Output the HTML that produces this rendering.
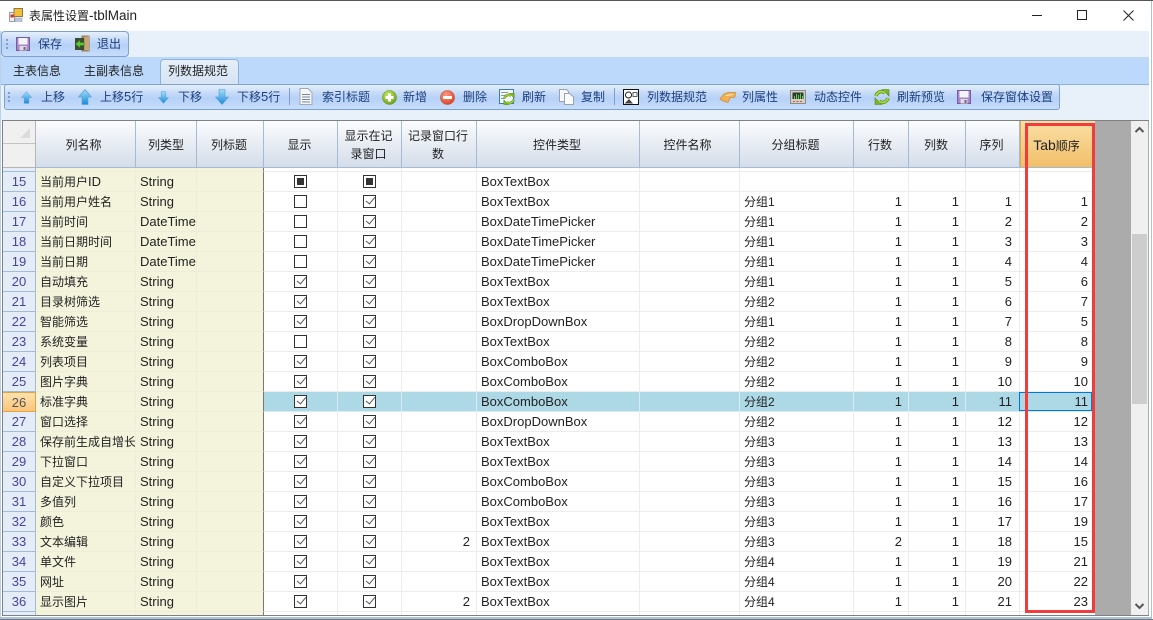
<!DOCTYPE html>
<html><head><meta charset="utf-8"><title>表属性设置-tblMain</title>
<style>
html,body{margin:0;padding:0;background:#fff}
body{width:1153px;height:620px;position:relative;overflow:hidden;font:12px "Liberation Sans","Noto Sans CJK SC",sans-serif;color:#222}
.a{position:absolute}
.t{position:absolute;white-space:nowrap;line-height:16px;color:#1d3f7e}
.i{position:absolute}
table{position:absolute;left:0;top:0;border-collapse:separate;border-spacing:0;table-layout:fixed;width:1092px}
td,th{box-sizing:border-box;padding:0;border-right:1px solid #ececec;border-bottom:1px solid #ececec;height:20px;white-space:nowrap;overflow:hidden;font-weight:normal}
th{height:47px;background:linear-gradient(#fbfcfe,#d4dde9);border-right:1px solid #a3bcd6;border-bottom:1px solid #a3bcd6;line-height:18px;color:#222;font-size:12px;padding:2px 2px 0 0}
th.w{padding-right:4px}
th.z{padding-right:0}
th.s{background:linear-gradient(#fadfa6,#f2bf68);border-left:1px solid #e5a850;border-right:0;padding-right:3px}
th.k{background:#f0f0f0;border-right:1px solid #b5b5b5;border-bottom:1px solid #b5b5b5;padding:0}
td:nth-child(1){background:#e4ecf8;border-right:1px solid #a3bcd6;border-bottom:1px solid #a3bcd6;text-align:center;color:#45459a;font-size:13px}
td:nth-child(2){background:#f4f4dc;border-color:#ededd8;padding-left:4px}
td:nth-child(3){background:#f4f4dc;border-color:#ededd8;padding-left:4px;font-size:13px}
td:nth-child(4){background:#f4f4dc;border-color:#ededd8;border-right:1px solid #777}
td:nth-child(5),td:nth-child(6){text-align:center;background:#fff}
td:nth-child(7),td:nth-child(11),td:nth-child(12),td:nth-child(13){text-align:right;padding-right:6px;font-size:13px;background:#fff}
td:nth-child(8){padding-left:4px;font-size:13px;background:#fff}
td:nth-child(9){background:#fff}
td:nth-child(10){padding-left:4px;background:#fff}
td:nth-child(14){text-align:right;padding-right:7px;font-size:13px;background:#fff;border-right:0}
td:nth-child(13){padding-right:7px}
tr.sel td{background:#add8e6;border-color:#d6ecf2}
tr.sel td:nth-child(1){background:linear-gradient(#fde2ae,#fac57a);border:1px solid #e8a040;border-left:0;color:#555}
tr.sel td:nth-child(2),tr.sel td:nth-child(3),tr.sel td:nth-child(4){background:#f4f4dc;border-color:#ededd8}
tr.sel td:nth-child(4){border-right:1px solid #777}
tr.p td{height:4px;font-size:0;line-height:0}
tr.q td{height:4px;font-size:0;line-height:0;border-bottom:0}
b{font-weight:normal;display:inline-block;width:13px;height:13px;box-sizing:border-box;border:1px solid #333;background:#fff;position:relative;vertical-align:middle;top:-1px}
b.c::after{content:"";position:absolute;left:1.5px;top:1.5px;width:8px;height:4px;border-left:1.4px solid #555;border-bottom:1.4px solid #555;transform:rotate(-50deg)}
b.m::after{content:"";position:absolute;left:2px;top:2px;width:7px;height:7px;background:#333}
.tb{background:linear-gradient(#e6effb 0,#c9ddf8 30%,#b6d1f8 55%,#c7dcfa 100%);border:1px solid #7da2ce;border-radius:3px;box-sizing:border-box}
.grip{position:absolute;width:2px;height:2px;background:#7f9fc6}
</style></head>
<body>
<svg width="0" height="0" style="position:absolute">
<defs>
<linearGradient id="bl" x1="0" y1="0" x2="0" y2="1"><stop offset="0" stop-color="#a4dcf8"/><stop offset="1" stop-color="#1a8ad8"/></linearGradient>
<radialGradient id="gr" cx=".4" cy=".3" r=".8"><stop offset="0" stop-color="#c8e860"/><stop offset="1" stop-color="#5c9a18"/></radialGradient>
<radialGradient id="rd" cx=".4" cy=".3" r=".8"><stop offset="0" stop-color="#fb9a80"/><stop offset="1" stop-color="#d83a20"/></radialGradient>
<symbol id="fl" viewBox="0 0 14 14"><path d="M.5.5h13v13H.5z" fill="#a888c8" stroke="#7a5aa0"/><path d="M2.500 1h9v6.500h-9z" fill="#f4f4f8"/><path d="M3.500 9h7v4.500h-7z" fill="#ddd"/><path d="M7.500 10h2v3h-2z" fill="#77608f"/></symbol>
<symbol id="up" viewBox="0 0 14 16"><path d="M7 .5 13.500 8H10V15.500H4V8H.5z" fill="url(#bl)" stroke="#4aa0d8" stroke-width=".6"/></symbol>
<symbol id="dn" viewBox="0 0 14 16"><path d="M7 15.500 13.500 8H10V.5H4V8H.5z" fill="url(#bl)" stroke="#4aa0d8" stroke-width=".6"/></symbol>
<symbol id="rc" viewBox="0 0 16 16">
<path d="M2 7C3 3 8 1 11 4" fill="none" stroke="#4f8a10" stroke-width="3.400"/><path d="M8.500.5H15V7z" fill="#7cb428" stroke="#4f8a10" stroke-width=".6"/><path d="M2 7C3 3 8 1 11 4" fill="none" stroke="#a6d63c" stroke-width="2"/>
<path d="M14 9C13 13 8 15 5 12" fill="none" stroke="#4f8a10" stroke-width="3.400"/><path d="M7.500 15.500H1V9z" fill="#7cb428" stroke="#4f8a10" stroke-width=".6"/><path d="M14 9C13 13 8 15 5 12" fill="none" stroke="#a6d63c" stroke-width="2"/>
</symbol>
</defs>
</svg>

<!-- title bar -->
<div class="a" style="left:0;top:0;width:1153px;height:1px;background:#555"></div>
<svg class="i" style="left:9px;top:8px" width="14" height="14" viewBox="0 0 14 14"><path d="M.5 4.500h5v9h-5z" fill="#eee" stroke="#999"/><path d="M1.500 6.500h3v3h-3z" fill="#d83020"/><path d="M5 .5h8.500v8H5z" fill="#f4c038" stroke="#8a7a50"/><path d="M6 10h7v3.500H6z" fill="#bcc8dc" stroke="#8a98b0" stroke-width=".6"/></svg>
<div class="t" style="left:29px;top:8px;color:#222;font-size:12px">表属性设置<span style="font-size:13.5px">-tblMain</span></div>
<div class="a" style="left:1032px;top:15px;width:10px;height:1px;background:#222"></div>
<div class="a" style="left:1077px;top:10px;width:10px;height:10px;box-sizing:border-box;border:1px solid #222"></div>
<svg class="i" style="left:1123px;top:10px" width="11" height="11" viewBox="0 0 11 11"><path d="M.5.500 10.500 10.500M10.500.500.5 10.500" stroke="#222" stroke-width="1" fill="none"/></svg>

<!-- toolbar band -->
<div class="a" style="left:0;top:31px;width:1151px;height:26px;background:#e8f0fa"></div>
<div class="a tb" style="left:1px;top:31px;width:128px;height:26px;border-radius:4px"></div>
<div class="grip" style="left:6px;top:39px"></div><div class="grip" style="left:6px;top:43px"></div><div class="grip" style="left:6px;top:47px"></div>
<svg class="i" style="left:16px;top:37px" width="14" height="14"><use href="#fl"/></svg>
<div class="t" style="left:38px;top:36px">保存</div>
<svg class="i" style="left:74px;top:35px" width="16" height="17" viewBox="0 0 16 17"><path d="M8 1h7v15H8z" fill="#b89868" stroke="#7a6038" stroke-width=".8"/><path d="M11 2 15 1v15l-4-1z" fill="#c8a878"/><path d="M1 3h9v12H1z" fill="#3c4c30"/><path d="M1.500 9 6 5v2.500h4v3H6V13z" fill="#5cc838" stroke="#2c7818" stroke-width=".5"/></svg>
<div class="t" style="left:97px;top:36px">退出</div>

<!-- tab strip -->
<div class="a" style="left:0;top:57px;width:1151px;height:27px;background:#bcd9fb"></div>
<div class="t" style="left:13px;top:63px;color:#222">主表信息</div>
<div class="t" style="left:84px;top:63px;color:#222">主副表信息</div>
<div class="a" style="left:160px;top:59px;width:79px;height:26px;box-sizing:border-box;background:linear-gradient(#e6eff9,#d6e3f4);border:1px solid #8fb2da;border-bottom:0;border-radius:4px 4px 0 0"></div>
<div class="t" style="left:168px;top:63px;color:#222">列数据规范</div>

<!-- tab panel -->
<div class="a" style="left:0;top:84px;width:1151px;height:36px;background:#e8f0fa;border-top:1px solid #8fb2da;box-sizing:border-box"></div>
<div class="a" style="left:160px;top:84px;width:79px;height:1px;background:#d6e3f4"></div>
<div class="a tb" style="left:4px;top:84px;width:1056px;height:26px"></div>
<div class="grip" style="left:8px;top:92px"></div><div class="grip" style="left:8px;top:96px"></div><div class="grip" style="left:8px;top:100px"></div>

<svg class="i" style="left:21px;top:91px" width="11" height="13"><use href="#up"/></svg>
<div class="t" style="left:41px;top:89px">上移</div>
<svg class="i" style="left:78px;top:89px" width="14" height="16"><use href="#up"/></svg>
<div class="t" style="left:100px;top:89px">上移<span style="font-size:13px">5</span>行</div>
<svg class="i" style="left:158px;top:91px" width="11" height="13"><use href="#dn"/></svg>
<div class="t" style="left:178px;top:89px">下移</div>
<svg class="i" style="left:215px;top:89px" width="14" height="16"><use href="#dn"/></svg>
<div class="t" style="left:237px;top:89px">下移<span style="font-size:13px">5</span>行</div>
<div class="a" style="left:289px;top:88px;width:1px;height:17px;background:#7f9fc6"></div>
<svg class="i" style="left:299px;top:88px" width="14" height="17" viewBox="0 0 14 17"><path d="M1 .5h8l4 4v12H1z" fill="#f4f6f8" stroke="#a0a8b0"/><path d="M3 6h8v1H3zM3 8.500h8v1H3zM3 11h8v1H3zM3 13.500h8v1H3z" fill="#7888a0"/></svg>
<div class="t" style="left:322px;top:89px">索引标题</div>

<svg class="i" style="left:382px;top:90px" width="15" height="15" viewBox="0 0 15 15"><circle cx="7.500" cy="7.500" r="7" fill="url(#gr)" stroke="#6a9a20" stroke-width=".6"/><path d="M6 3.500h3v2.500h2.500v3H9v2.500H6V9H3.500V6H6z" fill="#fff"/></svg>
<div class="t" style="left:403px;top:89px">新增</div>
<svg class="i" style="left:440px;top:90px" width="15" height="15" viewBox="0 0 15 15"><circle cx="7.500" cy="7.500" r="7" fill="url(#rd)" stroke="#c84a30" stroke-width=".6"/><path d="M3 6h9v3H3z" fill="#fff"/></svg>
<div class="t" style="left:463px;top:89px">删除</div>
<svg class="i" style="left:499px;top:89px" width="16" height="16" viewBox="0 0 16 16"><path d="M.5.500h14v14H.5z" fill="#f4f8fc" stroke="#3880b8"/><path d="M2 3h7v1H2zM2 6h5v1H2zM2 9h4v1H2z" fill="#8898a8"/><use href="#rc" x="4" y="4" width="12" height="12"/></svg>
<div class="t" style="left:522px;top:89px">刷新</div>
<svg class="i" style="left:559px;top:89px" width="15" height="16" viewBox="0 0 15 16"><path d="M.5.500h7l2 2v10H.5z" fill="#f8f8f8" stroke="#9aa2aa"/><path d="M5.500 4.500h5l4 3.500v7.500h-9z" fill="#fcfcfc" stroke="#9aa2aa"/></svg>
<div class="t" style="left:581px;top:89px">复制</div>
<div class="a" style="left:614px;top:88px;width:1px;height:17px;background:#7f9fc6"></div>
<svg class="i" style="left:623px;top:89px" width="16" height="16" viewBox="0 0 16 16"><path d="M.5.500h15v15H.5z" fill="#fff" stroke="#111"/><circle cx="5.500" cy="6" r="3" fill="#fff" stroke="#222"/><path d="M10 3.500h4v4h-4z" fill="#fff" stroke="#333" stroke-width=".8"/><path d="M1.500 14.500 6 10l4 4.500z" fill="#444"/></svg>
<div class="t" style="left:647px;top:89px">列数据规范</div>
<svg class="i" style="left:719px;top:90px" width="17" height="14" viewBox="0 0 17 14"><path d="M1 9 5 4 9 2.500h7.500L16 7 11 8 9 12.500 4 11z" fill="#f2b050" stroke="#c88a30" stroke-width=".7"/><path d="M7 5.500l7-1" stroke="#fff0c0" fill="none"/></svg>
<div class="t" style="left:742px;top:89px">列属性</div>
<svg class="i" style="left:790px;top:89px" width="16" height="16" viewBox="0 0 16 16"><path d="M.5 1.500h15v13H.5z" fill="#d0d0c8" stroke="#8c8c84"/><path d="M2.500 3.500h11v6.500h-11z" fill="#2c3c2c"/><path d="M4 10V7h1v3zM6 10V5h1v5zM8 10V6h1v4zM10 10V4.500h1V10zM12 10V7h1v3z" fill="#60c858"/><path d="M3 12h2v1H3zM6.500 12h2v1h-2zM10 12h2v1h-2z" fill="#d85040"/></svg>
<div class="t" style="left:814px;top:89px">动态控件</div>
<svg class="i" style="left:874px;top:89px" width="16" height="16"><use href="#rc"/></svg>
<div class="t" style="left:897px;top:89px">刷新预览</div>
<svg class="i" style="left:957px;top:90px" width="14" height="14"><use href="#fl"/></svg>
<div class="t" style="left:981px;top:89px">保存窗体设置</div>

<!-- grid -->
<div class="a" style="left:2px;top:120px;width:1147px;height:496px;box-sizing:border-box;border-top:1px solid #808080;border-left:1px solid #808080;border-bottom:1px solid #808080;background:#ababab"></div>
<div class="a" style="left:3px;top:121px;width:1092px;height:494px;overflow:hidden">
<table>
<colgroup><col style="width:33px"><col style="width:100px"><col style="width:61px"><col style="width:67px"><col style="width:74px"><col style="width:64px"><col style="width:75px"><col style="width:163px"><col style="width:100px"><col style="width:114px"><col style="width:55px"><col style="width:57px"><col style="width:54px"><col style="width:75px"></colgroup>
<tr><th class="k"></th><th class="w">列名称</th><th class="z">列类型</th><th>列标题</th><th>显示</th><th>显示在记<br>录窗口</th><th>记录窗口行<br>数</th><th>控件类型</th><th class="w">控件名称</th><th>分组标题</th><th>行数</th><th>列数</th><th>序列</th><th class="s"><span style="font-size:14px">Tab</span>顺序</th></tr>
<tr class="p"><td></td><td></td><td></td><td></td><td></td><td></td><td></td><td></td><td></td><td></td><td></td><td></td><td></td><td></td></tr>
<tr><td>15</td><td>当前用户<span style="font-size:13px">ID</span></td><td>String</td><td></td><td><b class="m"></b></td><td><b class="m"></b></td><td></td><td>BoxTextBox</td><td></td><td></td><td></td><td></td><td></td><td></td></tr>
<tr><td>16</td><td>当前用户姓名</td><td>String</td><td></td><td><b></b></td><td><b class="c"></b></td><td></td><td>BoxTextBox</td><td></td><td>分组1</td><td>1</td><td>1</td><td>1</td><td>1</td></tr>
<tr><td>17</td><td>当前时间</td><td>DateTime</td><td></td><td><b></b></td><td><b class="c"></b></td><td></td><td>BoxDateTimePicker</td><td></td><td>分组1</td><td>1</td><td>1</td><td>2</td><td>2</td></tr>
<tr><td>18</td><td>当前日期时间</td><td>DateTime</td><td></td><td><b></b></td><td><b class="c"></b></td><td></td><td>BoxDateTimePicker</td><td></td><td>分组1</td><td>1</td><td>1</td><td>3</td><td>3</td></tr>
<tr><td>19</td><td>当前日期</td><td>DateTime</td><td></td><td><b></b></td><td><b class="c"></b></td><td></td><td>BoxDateTimePicker</td><td></td><td>分组1</td><td>1</td><td>1</td><td>4</td><td>4</td></tr>
<tr><td>20</td><td>自动填充</td><td>String</td><td></td><td><b class="c"></b></td><td><b class="c"></b></td><td></td><td>BoxTextBox</td><td></td><td>分组1</td><td>1</td><td>1</td><td>5</td><td>6</td></tr>
<tr><td>21</td><td>目录树筛选</td><td>String</td><td></td><td><b class="c"></b></td><td><b class="c"></b></td><td></td><td>BoxTextBox</td><td></td><td>分组2</td><td>1</td><td>1</td><td>6</td><td>7</td></tr>
<tr><td>22</td><td>智能筛选</td><td>String</td><td></td><td><b class="c"></b></td><td><b class="c"></b></td><td></td><td>BoxDropDownBox</td><td></td><td>分组1</td><td>1</td><td>1</td><td>7</td><td>5</td></tr>
<tr><td>23</td><td>系统变量</td><td>String</td><td></td><td><b></b></td><td><b class="c"></b></td><td></td><td>BoxTextBox</td><td></td><td>分组2</td><td>1</td><td>1</td><td>8</td><td>8</td></tr>
<tr><td>24</td><td>列表项目</td><td>String</td><td></td><td><b class="c"></b></td><td><b class="c"></b></td><td></td><td>BoxComboBox</td><td></td><td>分组2</td><td>1</td><td>1</td><td>9</td><td>9</td></tr>
<tr><td>25</td><td>图片字典</td><td>String</td><td></td><td><b class="c"></b></td><td><b class="c"></b></td><td></td><td>BoxComboBox</td><td></td><td>分组2</td><td>1</td><td>1</td><td>10</td><td>10</td></tr>
<tr class="sel"><td>26</td><td>标准字典</td><td>String</td><td></td><td><b class="c"></b></td><td><b class="c"></b></td><td></td><td>BoxComboBox</td><td></td><td>分组2</td><td>1</td><td>1</td><td>11</td><td>11</td></tr>
<tr><td>27</td><td>窗口选择</td><td>String</td><td></td><td><b class="c"></b></td><td><b class="c"></b></td><td></td><td>BoxDropDownBox</td><td></td><td>分组2</td><td>1</td><td>1</td><td>12</td><td>12</td></tr>
<tr><td>28</td><td>保存前生成自增长</td><td>String</td><td></td><td><b class="c"></b></td><td><b class="c"></b></td><td></td><td>BoxTextBox</td><td></td><td>分组3</td><td>1</td><td>1</td><td>13</td><td>13</td></tr>
<tr><td>29</td><td>下拉窗口</td><td>String</td><td></td><td><b class="c"></b></td><td><b class="c"></b></td><td></td><td>BoxTextBox</td><td></td><td>分组3</td><td>1</td><td>1</td><td>14</td><td>14</td></tr>
<tr><td>30</td><td>自定义下拉项目</td><td>String</td><td></td><td><b class="c"></b></td><td><b class="c"></b></td><td></td><td>BoxComboBox</td><td></td><td>分组3</td><td>1</td><td>1</td><td>15</td><td>16</td></tr>
<tr><td>31</td><td>多值列</td><td>String</td><td></td><td><b class="c"></b></td><td><b class="c"></b></td><td></td><td>BoxComboBox</td><td></td><td>分组3</td><td>1</td><td>1</td><td>16</td><td>17</td></tr>
<tr><td>32</td><td>颜色</td><td>String</td><td></td><td><b class="c"></b></td><td><b class="c"></b></td><td></td><td>BoxTextBox</td><td></td><td>分组3</td><td>1</td><td>1</td><td>17</td><td>19</td></tr>
<tr><td>33</td><td>文本编辑</td><td>String</td><td></td><td><b class="c"></b></td><td><b class="c"></b></td><td>2</td><td>BoxTextBox</td><td></td><td>分组3</td><td>2</td><td>1</td><td>18</td><td>15</td></tr>
<tr><td>34</td><td>单文件</td><td>String</td><td></td><td><b class="c"></b></td><td><b class="c"></b></td><td></td><td>BoxTextBox</td><td></td><td>分组4</td><td>1</td><td>1</td><td>19</td><td>21</td></tr>
<tr><td>35</td><td>网址</td><td>String</td><td></td><td><b class="c"></b></td><td><b class="c"></b></td><td></td><td>BoxTextBox</td><td></td><td>分组4</td><td>1</td><td>1</td><td>20</td><td>22</td></tr>
<tr><td>36</td><td>显示图片</td><td>String</td><td></td><td><b class="c"></b></td><td><b class="c"></b></td><td>2</td><td>BoxTextBox</td><td></td><td>分组4</td><td>1</td><td>1</td><td>21</td><td>23</td></tr>
<tr class="q"><td></td><td></td><td></td><td></td><td></td><td></td><td></td><td></td><td></td><td></td><td></td><td></td><td></td><td></td></tr>
</table>
</div>
<!-- corner triangle -->
<svg class="i" style="left:19px;top:127px" width="12" height="12"><path d="M11 1V11H1z" fill="#dcdcdc"/></svg>
<div class="a" style="left:3px;top:143px;width:32px;height:1px;background:#c4c4c4"></div>

<!-- current cell -->
<div class="a" style="left:1019px;top:392px;width:73px;height:19px;box-sizing:border-box;border:1px solid #0078d7"></div>
<!-- red box -->
<div class="a" style="left:1025px;top:123px;width:70px;height:490px;box-sizing:border-box;border:3px solid #f03c3c"></div>

<!-- scrollbar -->
<div class="a" style="left:1131px;top:121px;width:17px;height:494px;background:#f0f0f0"></div>
<div class="a" style="left:1132px;top:234px;width:15px;height:170px;background:#cdcdcd"></div>
<svg class="i" style="left:1134px;top:125px" width="11" height="9" viewBox="0 0 11 9"><path d="M1.500 7 5.500 3l4 4" fill="none" stroke="#555" stroke-width="2"/></svg>
<svg class="i" style="left:1134px;top:602px" width="11" height="9" viewBox="0 0 11 9"><path d="M1.500 2l4 4 4-4" fill="none" stroke="#555" stroke-width="2"/></svg>

<!-- window edges -->
<div class="a" style="left:1149px;top:31px;width:2px;height:586px;background:#fff"></div>
<div class="a" style="left:1151px;top:1px;width:1px;height:618px;background:#a8c4e4"></div>
<div class="a" style="left:0;top:31px;width:1px;height:587px;background:#bcd0ea"></div>
<div class="a" style="left:1px;top:616px;width:1150px;height:1px;background:#fff"></div>
<div class="a" style="left:0;top:617px;width:1152px;height:2px;background:#a8c4e4"></div>
<div class="a" style="left:0;top:619px;width:1153px;height:1px;background:#777"></div>
</body></html>
